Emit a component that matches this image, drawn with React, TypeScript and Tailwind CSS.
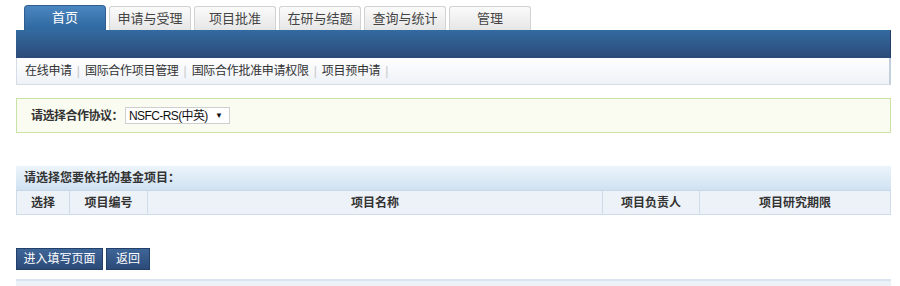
const TABS = ['首页', '申请与受理', '项目批准', '在研与结题', '查询与统计', '管理'];
const SUBNAV = ['在线申请', '国际合作项目管理', '国际合作批准申请权限', '项目预申请'];

export default function App() {
    return (
        <div
            className="w-[900px] h-[286px] overflow-hidden bg-white text-[12px] text-[#333]"
            style={{ fontFamily: '"Liberation Sans", "Noto Sans CJK SC", sans-serif' }}
        >
            <div className="ml-[16px] w-[875px]">
                {/* tabs */}
                <div className="flex items-end gap-[3px] pl-[8px] pt-[5px] h-[30px]">
                    {TABS.map((tab, index) =>
                        index === 0 ? (
                            <div
                                key={tab}
                                className="w-[82px] h-[25px] flex items-center justify-center rounded-t-[4px] bg-gradient-to-b from-[#4a86c0] to-[#2f679f] border border-b-0 border-[#2f5f90] text-white text-[13px]"
                            >
                                {tab}
                            </div>
                        ) : (
                            <div
                                key={tab}
                                className="w-[82px] h-[24px] flex items-center justify-center rounded-t-[3px] bg-gradient-to-b from-[#fbfbfb] to-[#e6e6e6] border border-b-0 border-[#d2d2d2] text-[#444] text-[13px]"
                            >
                                {tab}
                            </div>
                        )
                    )}
                </div>

                {/* blue bar */}
                <div className="h-[28px] bg-gradient-to-b from-[#336ba0] to-[#2c4a7a] border-r border-[#243e66]" />

                {/* sub nav */}
                <div className="h-[27px] flex items-center px-[8px] bg-gradient-to-b from-white to-[#eef2f7] border-l border-b border-[#d6dde6] border-r-2 border-r-[#c3cfdc]">
                    {SUBNAV.map((item) => (
                        <span key={item} className="flex items-center">
                            <span className="tracking-[-0.3px]">{item}</span>
                            <span className="mx-[5px] text-[#c8c8c8]">|</span>
                        </span>
                    ))}
                </div>
            </div>

            {/* agreement */}
            <div className="mt-[13px] ml-[16px] w-[875px] h-[35px] flex items-center pl-[14px] bg-[#fbfcf1] border border-[#c9e3a6]">
                <span className="font-bold text-[#333] tracking-[-0.5px]">请选择合作协议：</span>
                <div className="ml-[2px] w-[105px] h-[17px] flex items-center justify-between pl-[3px] pr-[6px] bg-white border border-[#cfcfcf]">
                    <span className="text-[#111] tracking-[-0.6px]">NSFC-RS(中英)</span>
                    <span className="text-[8px] text-[#111]">▼</span>
                </div>
            </div>

            {/* table */}
            <div className="mt-[33px] ml-[16px] w-[875px]">
                <div className="h-[25px] flex items-center pl-[8px] font-bold bg-gradient-to-b from-[#edf4fb] to-[#cfe2f2] border-b border-[#c7d8e8]">
                    请选择您要依托的基金项目：
                </div>
                <div className="grid grid-cols-[53px_78px_455px_97px_1fr] h-[24px] bg-[#edf2f8] border border-t-0 border-[#cfdbe8] font-bold text-[#333]">
                    <div className="flex items-center justify-center border-r border-[#cfdbe8]">选择</div>
                    <div className="flex items-center justify-center border-r border-[#cfdbe8]">项目编号</div>
                    <div className="flex items-center justify-center border-r border-[#cfdbe8]">项目名称</div>
                    <div className="flex items-center justify-center border-r border-[#cfdbe8]">项目负责人</div>
                    <div className="flex items-center justify-center">项目研究期限</div>
                </div>
            </div>

            {/* buttons */}
            <div className="mt-[33px] ml-[16px] flex gap-[3px]">
                <button className="w-[87px] h-[22px] flex items-center justify-center bg-gradient-to-b from-[#3f6698] to-[#2b4a78] border border-[#23406a] text-white text-[12px]">
                    进入填写页面
                </button>
                <button className="w-[44px] h-[22px] flex items-center justify-center bg-gradient-to-b from-[#3f6698] to-[#2b4a78] border border-[#23406a] text-white text-[12px]">
                    返回
                </button>
            </div>

            {/* bottom bar */}
            <div className="mt-[9px] ml-[16px] w-[875px] h-[10px] bg-[#edf2f8] border-t-2 border-[#d8e4ef]" />
        </div>
    );
}
